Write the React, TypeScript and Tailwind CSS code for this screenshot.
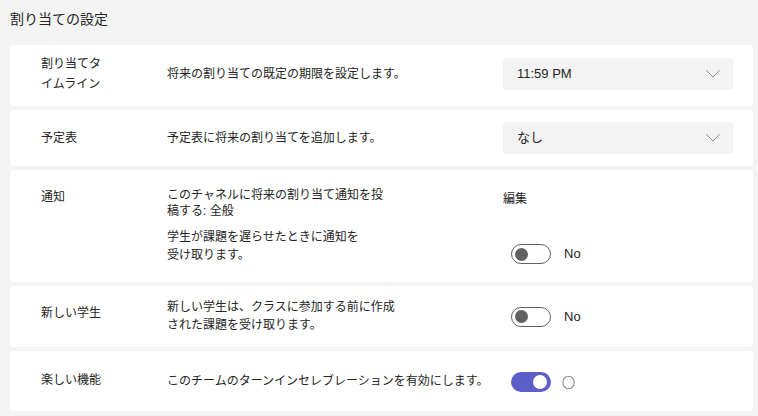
import React from "react";

const FONT = "[font-family:'Liberation_Sans','Noto_Sans_CJK_JP',sans-serif]";

const Chevron = () => (
  <svg width="14" height="8" viewBox="0 0 14 8" fill="none">
    <path d="M0.5 0.5 L7 7 L13.5 0.5" stroke="#8a8a8a" strokeWidth="1" />
  </svg>
);

const Dropdown: React.FC<{ value: string }> = ({ value }) => (
  <div className="flex h-[32px] w-[230px] items-center justify-between rounded-[4px] bg-[#f3f3f3] pl-[14px] pr-[13px]">
    <span className="text-[13px] text-[#242424]">{value}</span>
    <Chevron />
  </div>
);

const Switch: React.FC<{ on?: boolean }> = ({ on }) =>
  on ? (
    <div className="flex h-[20px] w-[40px] items-center justify-end rounded-full bg-[#5b5fc7] pr-[4px]">
      <div className="h-[14px] w-[14px] rounded-full bg-white" />
    </div>
  ) : (
    <div className="flex h-[20px] w-[40px] items-center rounded-full border border-[#616161] bg-white pl-[3px]">
      <div className="h-[13px] w-[13px] rounded-full bg-[#616161]" />
    </div>
  );

const Toggle: React.FC<{ label: string }> = ({ label }) => (
  <div className="ml-[8px] flex items-center">
    <Switch />
    <span className="ml-[13px] text-[13px] text-[#242424]">{label}</span>
  </div>
);

export default function App() {
  return (
    <div className={`${FONT} min-h-[416px] w-[758px] bg-[#f4f4f4] pl-[10px] pr-[5px] text-[12px] text-[#242424]`}>
      <div className="pt-[9px] pb-[16px] text-[14px] leading-[20px]">割り当ての設定</div>

      <div className="flex flex-col gap-[4px]">
        {/* timeline */}
        <div className="flex h-[61px] items-center rounded-[4px] bg-white pb-[3px] pl-[31px] pr-[20px]">
          <div className="w-[126px] leading-[20px]">
            割り当てタ
            <br />
            イムライン
          </div>
          <div className="w-[336px]">将来の割り当ての既定の期限を設定します。</div>
          <Dropdown value="11:59 PM" />
        </div>

        {/* calendar */}
        <div className="flex h-[56px] items-center rounded-[4px] bg-white pl-[31px] pr-[20px]">
          <div className="w-[126px]">予定表</div>
          <div className="w-[336px]">予定表に将来の割り当てを追加します。</div>
          <Dropdown value="なし" />
        </div>

        {/* notifications */}
        <div className="flex h-[112px] rounded-[4px] bg-white pl-[31px] pr-[20px] pt-[17px]">
          <div className="w-[126px] pt-[2px] leading-[16px]">通知</div>
          <div className="flex w-[336px] flex-col">
            <div className="leading-[16px]">
              このチャネルに将来の割り当て通知を投
              <br />
              稿する: 全般
            </div>
            <div className="mt-[9px] leading-[18px]">
              学生が課題を遅らせたときに通知を
              <br />
              受け取ります。
            </div>
          </div>
          <div className="flex flex-col">
            <div className="pt-[4px] leading-[16px]">編集</div>
            <div className="mt-[37px]">
              <Toggle label="No" />
            </div>
          </div>
        </div>

        {/* new students */}
        <div className="flex h-[61px] items-center rounded-[4px] bg-white pl-[31px] pr-[20px]">
          <div className="w-[126px] pb-[8px]">新しい学生</div>
          <div className="w-[336px] pb-[2px] leading-[18px]">
            新しい学生は、クラスに参加する前に作成
            <br />
            された課題を受け取ります。
          </div>
          <Toggle label="No" />
        </div>

        {/* fun stuff */}
        <div className="flex h-[60px] items-center rounded-[4px] bg-white pl-[31px] pr-[20px]">
          <div className="w-[126px] pb-[3px]">楽しい機能</div>
          <div className="w-[336px]">このチームのターンインセレブレーションを有効にします。</div>
          <div className="ml-[8px] flex items-center pt-[1px]">
            <Switch on />
            <span className="ml-[11px] [font-family:'Noto_Sans_CJK_JP',sans-serif] text-[13px] leading-[14px] text-black">
              ○
            </span>
          </div>
        </div>
      </div>
    </div>
  );
}
